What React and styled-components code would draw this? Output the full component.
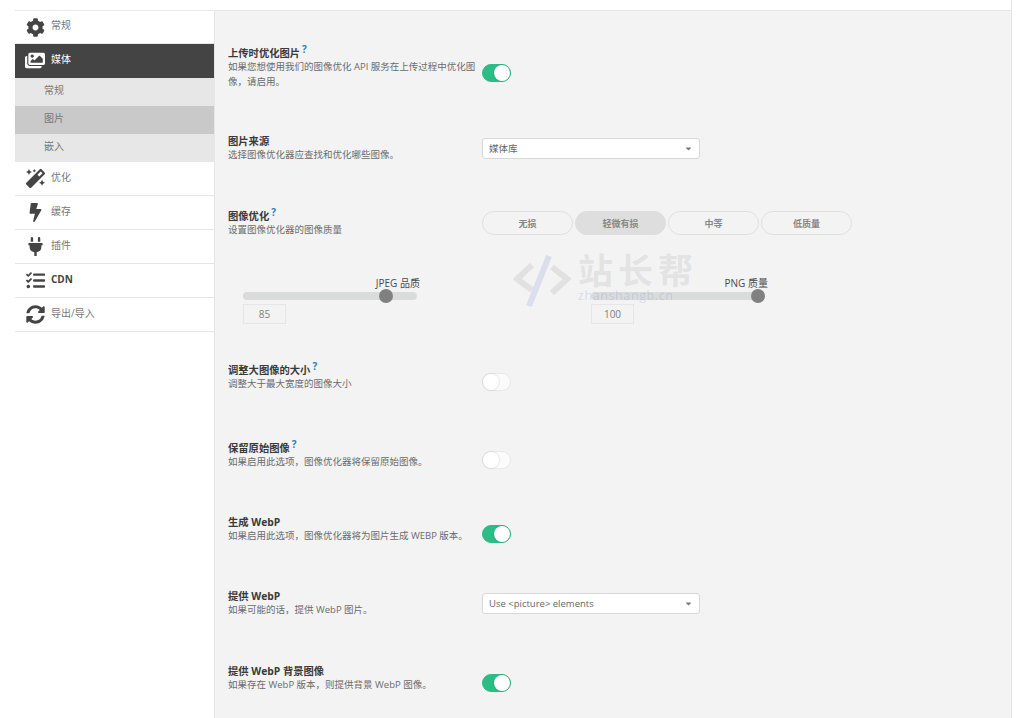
import React from "react";
import styled, { createGlobalStyle } from "styled-components";
import { FaCog, FaImages, FaMagic, FaBolt, FaPlug, FaTasks, FaSyncAlt, FaCaretDown } from "react-icons/fa";

const FONT = `"Open Sans", "Noto Sans CJK SC", sans-serif`;

const GlobalStyle = createGlobalStyle`
  html, body {
    margin: 0;
    background: #fff;
    font-family: ${FONT};
  }
  * {
    box-sizing: border-box;
  }
`;

const Page = styled.div`
  width: 1024px;
  height: 718px;
  overflow: hidden;
  padding: 0 12px 0 15px;
`;
const Frame = styled.div`
  height: 100%;
  display: flex;
  flex-direction: column;
  border-right: 1px solid #e4e4e4;
`;
const TopBar = styled.div`
  height: 11px;
  flex: none;
  border-bottom: 1px solid #e8e8e8;
`;
const Body = styled.div`
  flex: 1;
  display: flex;
  min-height: 0;
`;
const Sidebar = styled.nav`
  width: 199px;
  flex: none;
`;
const NavItem = styled.div`
  height: ${(p) => p.$height || 34}px;
  display: flex;
  align-items: center;
  padding-left: 10px;
  gap: 6px;
  background: ${(p) => (p.$active ? "#444444" : "#fff")};
  border-bottom: 1px solid ${(p) => (p.$active ? "#444444" : "#e6e6e6")};
  color: ${(p) => (p.$active ? "#fff" : "#444")};
`;
const NavIcon = styled.span`
  width: 20px;
  height: 20px;
  flex: none;
  display: flex;
  align-items: center;
  justify-content: center;
  font-size: ${(p) => p.$size || 19}px;
`;
const NavLabel = styled.span`
  padding-bottom: 4px;
  font-size: 10px;
  line-height: 14px;
  font-weight: ${(p) => (p.$bold ? 700 : 400)};
  color: ${(p) => (p.$active ? "#fff" : p.$bold ? "#444" : "#777")};
`;
const SubItem = styled.div`
  height: 28px;
  display: flex;
  align-items: center;
  padding: 0 0 5px 29px;
  font-size: 10px;
  color: #777;
  background: ${(p) => (p.$active ? "#c9c9c9" : "#e7e7e7")};
`;
const Content = styled.main`
  flex: 1;
  position: relative;
  background: #f3f3f3;
  padding: 35px 0 0 13px;
  border-left: 1px solid #e6e6e6;
`;
const Row = styled.section`
  height: ${(p) => p.$height}px;
`;
const RowMain = styled.div`
  display: flex;
  align-items: center;
`;
const Info = styled.div`
  width: 254px;
  flex: none;
`;
const Title = styled.h3`
  margin: 0;
  font-size: 10.3px;
  line-height: 14px;
  font-weight: 700;
  color: #3a3a3a;
`;
const Help = styled.sup`
  font-size: 10px;
  line-height: 0;
  margin-left: 2px;
  color: #2d7fb8;
  font-weight: 700;
`;
const Desc = styled.p`
  margin: 0;
  font-size: 9.5px;
  line-height: 14.5px;
  color: #6b6b6b;
`;
const Toggle = styled.div`
  width: 29px;
  height: 18px;
  margin-top: 10px;
  border-radius: 9px;
  display: flex;
  justify-content: ${(p) => (p.$on ? "flex-end" : "flex-start")};
  background: ${(p) => (p.$on ? "#2bbd85" : "#fbfbfb")};
  border: 1px solid ${(p) => (p.$on ? "#2bbd85" : "#e8e8e8")};
`;
const Knob = styled.span`
  width: 16px;
  height: 16px;
  border-radius: 50%;
  background: #fff;
  box-shadow: 0 0 1px 1px rgba(0, 0, 0, 0.08);
`;
const Select = styled.div`
  width: 218px;
  height: 21px;
  display: flex;
  align-items: center;
  justify-content: space-between;
  padding: 0 6px;
  background: #fff;
  border: 1px solid #d8d8d8;
  border-radius: 3px;
  font-size: 9.5px;
  color: #666;
  svg {
    font-size: 9px;
    color: #777;
  }
`;
const Buttons = styled.div`
  display: flex;
  gap: 2px;
`;
const Choice = styled.div`
  width: 91px;
  height: 24px;
  display: flex;
  align-items: center;
  justify-content: center;
  border-radius: 12px;
  font-size: 9px;
  font-weight: 600;
  color: #888;
  background: ${(p) => (p.$active ? "#dedede" : "transparent")};
  border: 1px solid ${(p) => (p.$active ? "#dedede" : "#e0e0e0")};
`;
const Sliders = styled.div`
  display: flex;
  margin: 38px 0 0 15px;
`;
const SliderBox = styled.div`
  width: 348px;
`;
const SliderHead = styled.div`
  width: 177px;
  text-align: right;
  font-size: 10px;
  line-height: 14px;
  color: #4a4a4a;
`;
const Track = styled.div`
  position: relative;
  width: 174px;
  height: 8px;
  margin-top: 2px;
  border-radius: 4px;
  background: #dadcdc;
`;
const Thumb = styled.span`
  position: absolute;
  top: -3px;
  margin-left: -7px;
  width: 14px;
  height: 14px;
  border-radius: 50%;
  background: #808080;
`;
const ValueBox = styled.div`
  width: 43px;
  height: 20px;
  margin-top: 4px;
  display: flex;
  align-items: center;
  justify-content: center;
  font-size: 10px;
  color: #808080;
  border: 1px solid #e6e6e6;
`;
const Watermark = styled.div`
  position: absolute;
  left: 298px;
  top: 241px;
  display: flex;
  gap: 7px;
  pointer-events: none;
`;
const MarkText = styled.div`
  display: flex;
  flex-direction: column;
`;
const MarkCn = styled.span`
  font-size: 35px;
  line-height: 38px;
  font-weight: 700;
  letter-spacing: 5px;
  color: rgba(120, 120, 120, 0.14);
`;
const MarkEn = styled.span`
  font-size: 12.5px;
  line-height: 12px;
  letter-spacing: 0.6px;
  color: rgba(110, 130, 210, 0.22);
`;

const Slider = ({ label, value, at }) => (
  <SliderBox>
    <SliderHead>{label}</SliderHead>
    <Track>
      <Thumb style={{ left: at + "%" }} />
    </Track>
    <ValueBox>{value}</ValueBox>
  </SliderBox>
);

const Setting = ({ height, title, help, desc, children, extra }) => (
  <Row $height={height}>
    <RowMain>
      <Info>
        <Title>
          {title}
          {help && <Help>?</Help>}
        </Title>
        <Desc>{desc}</Desc>
      </Info>
      {children}
    </RowMain>
    {extra}
  </Row>
);

const Switch = ({ on }) => (
  <Toggle $on={on}>
    <Knob />
  </Toggle>
);

const Dropdown = ({ children }) => (
  <Select>
    {children}
    <FaCaretDown />
  </Select>
);

export default function App() {
  return (
    <Page>
      <GlobalStyle />
      <Frame>
        <TopBar />
        <Body>
          <Sidebar>
            <NavItem $height={33}>
              <NavIcon>
                <FaCog />
              </NavIcon>
              <NavLabel>常规</NavLabel>
            </NavItem>
            <NavItem $active>
              <NavIcon $size={21}>
                <FaImages />
              </NavIcon>
              <NavLabel $active>媒体</NavLabel>
            </NavItem>
            <SubItem>常规</SubItem>
            <SubItem $active>图片</SubItem>
            <SubItem>嵌入</SubItem>
            <NavItem>
              <NavIcon>
                <FaMagic />
              </NavIcon>
              <NavLabel>优化</NavLabel>
            </NavItem>
            <NavItem>
              <NavIcon>
                <FaBolt />
              </NavIcon>
              <NavLabel>缓存</NavLabel>
            </NavItem>
            <NavItem>
              <NavIcon>
                <FaPlug />
              </NavIcon>
              <NavLabel>插件</NavLabel>
            </NavItem>
            <NavItem>
              <NavIcon>
                <FaTasks />
              </NavIcon>
              <NavLabel $bold>CDN</NavLabel>
            </NavItem>
            <NavItem>
              <NavIcon>
                <FaSyncAlt />
              </NavIcon>
              <NavLabel>导出/导入</NavLabel>
            </NavItem>
          </Sidebar>
          <Content>
            <Setting
              height={88}
              title="上传时优化图片"
              help
              desc="如果您想使用我们的图像优化 API 服务在上传过程中优化图像，请启用。"
            >
              <Switch on />
            </Setting>
            <Setting height={75} title="图片来源" desc="选择图像优化器应查找和优化哪些图像。">
              <Dropdown>媒体库</Dropdown>
            </Setting>
            <Setting
              height={154}
              title="图像优化"
              help
              desc="设置图像优化器的图像质量"
              extra={
                <Sliders>
                  <Slider label="JPEG 品质" value="85" at={82} />
                  <Slider label="PNG 质量" value="100" at={96} />
                </Sliders>
              }
            >
              <Buttons>
                <Choice>无损</Choice>
                <Choice $active>轻微有损</Choice>
                <Choice>中等</Choice>
                <Choice>低质量</Choice>
              </Buttons>
            </Setting>
            <Setting height={78} title="调整大图像的大小" help desc="调整大于最大宽度的图像大小">
              <Switch />
            </Setting>
            <Setting height={74} title="保留原始图像" help desc="如果启用此选项，图像优化器将保留原始图像。">
              <Switch />
            </Setting>
            <Setting height={74} title="生成 WebP" desc="如果启用此选项，图像优化器将为图片生成 WEBP 版本。">
              <Switch on />
            </Setting>
            <Setting height={75} title="提供 WebP" desc="如果可能的话，提供 WebP 图片。">
              <Dropdown>{"Use <picture> elements"}</Dropdown>
            </Setting>
            <Setting height={54} title="提供 WebP 背景图像" desc="如果存在 WebP 版本，则提供背景 WebP 图像。">
              <Switch on />
            </Setting>
            <Watermark>
              <svg width="58" height="56" viewBox="0 0 58 56" fill="none" strokeWidth="6">
                <path d="M19 13 L4 27 L19 38" stroke="rgba(120,120,120,0.14)" />
                <path d="M39 15 L54 27 L39 41" stroke="rgba(120,120,120,0.14)" />
                <path d="M36 4 L16 54" stroke="rgba(110,130,210,0.18)" />
              </svg>
              <MarkText>
                <MarkCn>站长帮</MarkCn>
                <MarkEn>zhanshangb.cn</MarkEn>
              </MarkText>
            </Watermark>
          </Content>
        </Body>
      </Frame>
    </Page>
  );
}
